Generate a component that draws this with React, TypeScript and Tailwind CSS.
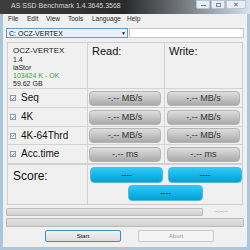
import React from "react";

const rows = [
	{ label: "Seq", unit: "MB/s", h: "h-[19px]" },
	{ label: "4K", unit: "MB/s", h: "h-[19px]" },
	{ label: "4K-64Thrd", unit: "MB/s", h: "h-[18px]" },
	{ label: "Acc.time", unit: "ms", h: "h-[19px]" },
];

function GrayBtn({ text }: { text: string }) {
	return (
		<div className="h-[15px] rounded-[4px] bg-gradient-to-b from-[#dedede] via-[#c4c4c4] to-[#a9a9a9] border border-[#b4b4b4] flex items-center justify-center text-[9px] text-[#333] leading-none">
			{text}
		</div>
	);
}

function BlueBtn({ w }: { w: string }) {
	return (
		<div
			className={`${w} h-[16px] rounded-[4px] bg-gradient-to-b from-[#2ccaf5] via-[#14b6ea] to-[#0a9ed2] border border-[#55b8dc] flex items-center justify-center text-[8px] font-bold text-[#1a3a4a] leading-none`}
		>
			----
		</div>
	);
}

function Check() {
	return (
		<div className="w-[6px] h-[6px] border border-[#8a9bb0] bg-white flex items-center justify-center">
			<svg width="5" height="5" viewBox="0 0 5 5">
				<path d="M0.6 2.6 L2 3.9 L4.4 0.9" stroke="#2b4a7a" strokeWidth="0.9" fill="none" />
			</svg>
		</div>
	);
}

export default function App() {
	return (
		<div className="w-[250px] h-[250px] overflow-hidden bg-[#a9c6dc] flex flex-col font-['Liberation_Sans',Arial,sans-serif]">
			{/* title bar */}
			<div className="h-[14px] flex items-start bg-gradient-to-r from-[#3d3d3d] via-[#2a2a2a] to-[#d5e3ef]">
				<span className="pl-[11px] pt-[2px] text-[7px] leading-none text-[#d8d8d8] whitespace-nowrap">
					AS SSD Benchmark 1.4.3645.3568
				</span>
				<div className="ml-auto flex items-start gap-[1px] pr-[4px]">
					<div className="w-[14px] h-[9px] rounded-b-[2px] border border-[#b7c7d6] bg-[#e8eef4] flex items-end justify-center pb-[2px]">
						<div className="w-[5px] h-[1px] bg-[#6b7b8b]" />
					</div>
					<div className="w-[14px] h-[9px] rounded-b-[2px] border border-[#b7c7d6] bg-[#e8eef4] flex items-center justify-center">
						<div className="w-[5px] h-[4px] border border-[#7b8b9b]" />
					</div>
					<div className="w-[20px] h-[9px] rounded-b-[2px] border border-[#b7c7d6] bg-[#e8eef4] flex items-center justify-center text-[7px] leading-none text-[#667]">
						✕
					</div>
				</div>
			</div>
			{/* client area */}
			<div className="flex-1 mx-[3px] mb-[3px] bg-[#f0f0f0] flex flex-col">
				{/* menu */}
				<div className="h-[11px] flex items-center pl-[5px] text-[6.5px] leading-none text-[#222]">
					<span className="w-[19px]">File</span>
					<span className="w-[19px]">Edit</span>
					<span className="w-[22px]">View</span>
					<span className="w-[24px]">Tools</span>
					<span className="w-[35px]">Language</span>
					<span>Help</span>
				</div>
				{/* selectors */}
				<div className="mt-[3px] flex h-[10px] px-[3px] gap-[1px]">
					<div className="w-[122px] h-full border border-[#5c9cd0] bg-[#e9f2fa] flex items-center pl-[2px] text-[7px] leading-none text-[#111]">
						<span>C: OCZ-VERTEX</span>
						<span className="ml-auto mr-[1px] text-[5px]">▼</span>
					</div>
					<div className="flex-1 h-full border border-[#c5c5c5] bg-white" />
				</div>
				{/* main box */}
				<div className="mt-[4px] ml-[4px] mr-[4px] border border-[#cfcfcf] bg-[#f0f0f0] flex flex-col">
					<div className="h-[46px] flex border-b border-[#d2d2d2]">
						<div className="w-[80px] border-r border-[#d2d2d2] pl-[5px] pt-[3px] text-[7px] leading-[8px] text-[#222]">
							<div className="text-[8px] leading-[9px]">OCZ-VERTEX</div>
							<div className="mt-[1px]">1.4</div>
							<div>iaStor</div>
							<div className="text-[#3aa43a]">103424 K - OK</div>
							<div>59.62 GB</div>
						</div>
						<div className="w-[77px] border-r border-[#d2d2d2] pl-[4px] pt-[3px] text-[11px] leading-none text-[#111]">
							Read:
						</div>
						<div className="flex-1 pl-[4px] pt-[3px] text-[11px] leading-none text-[#111]">
							Write:
						</div>
					</div>
					{rows.map((r) => (
						<div key={r.label} className={`${r.h} flex border-b border-[#d2d2d2]`}>
							<div className="w-[80px] border-r border-[#d2d2d2] flex items-center pl-[2px] gap-[5px]">
								<Check />
								<span className="text-[10px] leading-none text-[#111]">{r.label}</span>
							</div>
							<div className="w-[77px] border-r border-[#d2d2d2] pl-[1px] pr-[3px] flex flex-col justify-center">
								<GrayBtn text={`-.-- ${r.unit}`} />
							</div>
							<div className="flex-1 pl-[2px] pr-[2px] flex flex-col justify-center">
								<GrayBtn text={`-.-- ${r.unit}`} />
							</div>
						</div>
					))}
					<div className="h-[40px] flex border-t border-[#d2d2d2]">
						<div className="w-[80px] border-r border-[#d2d2d2] pl-[5px] pt-[5px] text-[12px] leading-none text-[#111]">
							Score:
						</div>
						<div className="flex-1 flex flex-col pt-[2px] gap-[2px]">
							<div className="flex pl-[2px] gap-[5px]">
								<BlueBtn w="w-[73px]" />
								<BlueBtn w="w-[74px]" />
							</div>
							<div className="pl-[40px]">
								<BlueBtn w="w-[75px]" />
							</div>
						</div>
					</div>
				</div>
				{/* progress */}
				<div className="mt-[2px] flex items-center pl-[3px] h-[9px]">
					<div className="w-[197px] h-[8px] border border-[#bcbcbc] rounded-[1px] bg-gradient-to-b from-[#e4e4e4] to-[#d0d0d0]" />
					<span className="ml-[12px] text-[5px] leading-none text-[#777]">--:--:--</span>
				</div>
				<div className="mt-[2px] mx-[3px] h-[9px] border border-[#bcbcbc] rounded-[1px] bg-gradient-to-b from-[#e4e4e4] to-[#d0d0d0]" />
				<div className="mt-[3px] flex pl-[42px] gap-[17px]">
					<div className="w-[76px] h-[12px] border border-[#3c8fc8] rounded-[2px] bg-gradient-to-b from-[#f2f2f2] to-[#dcdcdc] flex items-center justify-center text-[6px] leading-none text-[#111]">
						Start
					</div>
					<div className="w-[76px] h-[12px] border border-[#c8c8c8] rounded-[2px] bg-[#f4f4f4] flex items-center justify-center text-[6px] leading-none text-[#9a9a9a]">
						Abort
					</div>
				</div>
			</div>
		</div>
	);
}
